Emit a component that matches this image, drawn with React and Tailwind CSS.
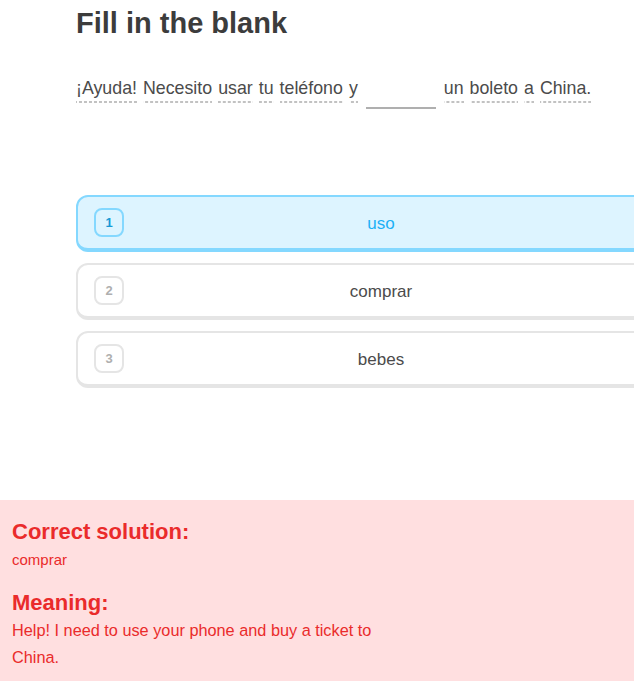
const words = ["¡Ayuda!", "Necesito", "usar", "tu", "teléfono", "y"];
const after = ["un", "boleto", "a", "China."];
const options = [
  { n: 1, text: "uso", selected: true },
  { n: 2, text: "comprar" },
  { n: 3, text: "bebes" },
];

function Word({ children }) {
  return (
    <span className="inline-block leading-[22px] pb-[4px] mr-[6px] bg-[linear-gradient(to_right,#c2c2c2_60%,transparent_0)] bg-[length:5px_2px] bg-repeat-x bg-bottom">
      {children}
    </span>
  );
}

export default function App() {
  return (
    <div
      className="w-[634px] h-[681px] overflow-hidden bg-white flex flex-col"
      style={{ fontFamily: '"Liberation Sans", Arial, sans-serif' }}
    >
      <div className="pl-[76px]">
        <h1 className="text-[29px] font-bold text-[#3c3c3c] leading-[34px] pt-[6px]">
          Fill in the blank
        </h1>

        {/* sentence */}
        <div className="mt-[37px] flex items-end text-[17.8px] text-[#4b4b4b]">
          {words.map((w, i) => (
            <Word key={i}>{w}</Word>
          ))}
          <span className="inline-block w-[70px] h-[30px] border-b-2 border-[#afafaf] mx-[2px] mb-[-6px] mr-[8px]" />
          {after.map((w, i) => (
            <Word key={i}>{w}</Word>
          ))}
        </div>

        {/* options */}
        <div className="mt-[92px] flex flex-col gap-[11px] w-[610px]">
          {options.map((o) => (
            <div
              key={o.n}
              className={`h-[57px] rounded-[12px] border-2 border-b-4 flex items-center px-[16px] ${
                o.selected
                  ? "bg-[#ddf4ff] border-[#84d8ff]"
                  : "bg-white border-[#e5e5e5]"
              }`}
            >
              <div
                className={`w-[30px] h-[29px] rounded-[8px] border-2 flex items-center justify-center text-[13px] font-bold ${
                  o.selected
                    ? "border-[#84d8ff] text-[#1899d6]"
                    : "border-[#e5e5e5] text-[#afafaf]"
                }`}
              >
                {o.n}
              </div>
              <div
                className={`flex-1 text-center text-[17px] pr-[30px] pt-[3px] ${
                  o.selected ? "text-[#1cb0f6]" : "text-[#4b4b4b]"
                }`}
              >
                {o.text}
              </div>
            </div>
          ))}
        </div>
      </div>

      {/* solution panel */}
      <div className="mt-auto h-[181px] bg-[#ffdfe0] px-[12px] pt-[18px] text-[#ea2b2b]">
        <div className="text-[22px] font-bold leading-[28px]">Correct solution:</div>
        <div className="text-[15px] leading-[26px] mt-[1px]">comprar</div>
        <div className="text-[22px] font-bold leading-[28px] mt-[16px]">Meaning:</div>
        <div className="text-[16.3px] leading-[27px] max-w-[385px]">
          Help! I need to use your phone and buy a ticket to China.
        </div>
      </div>
    </div>
  );
}
